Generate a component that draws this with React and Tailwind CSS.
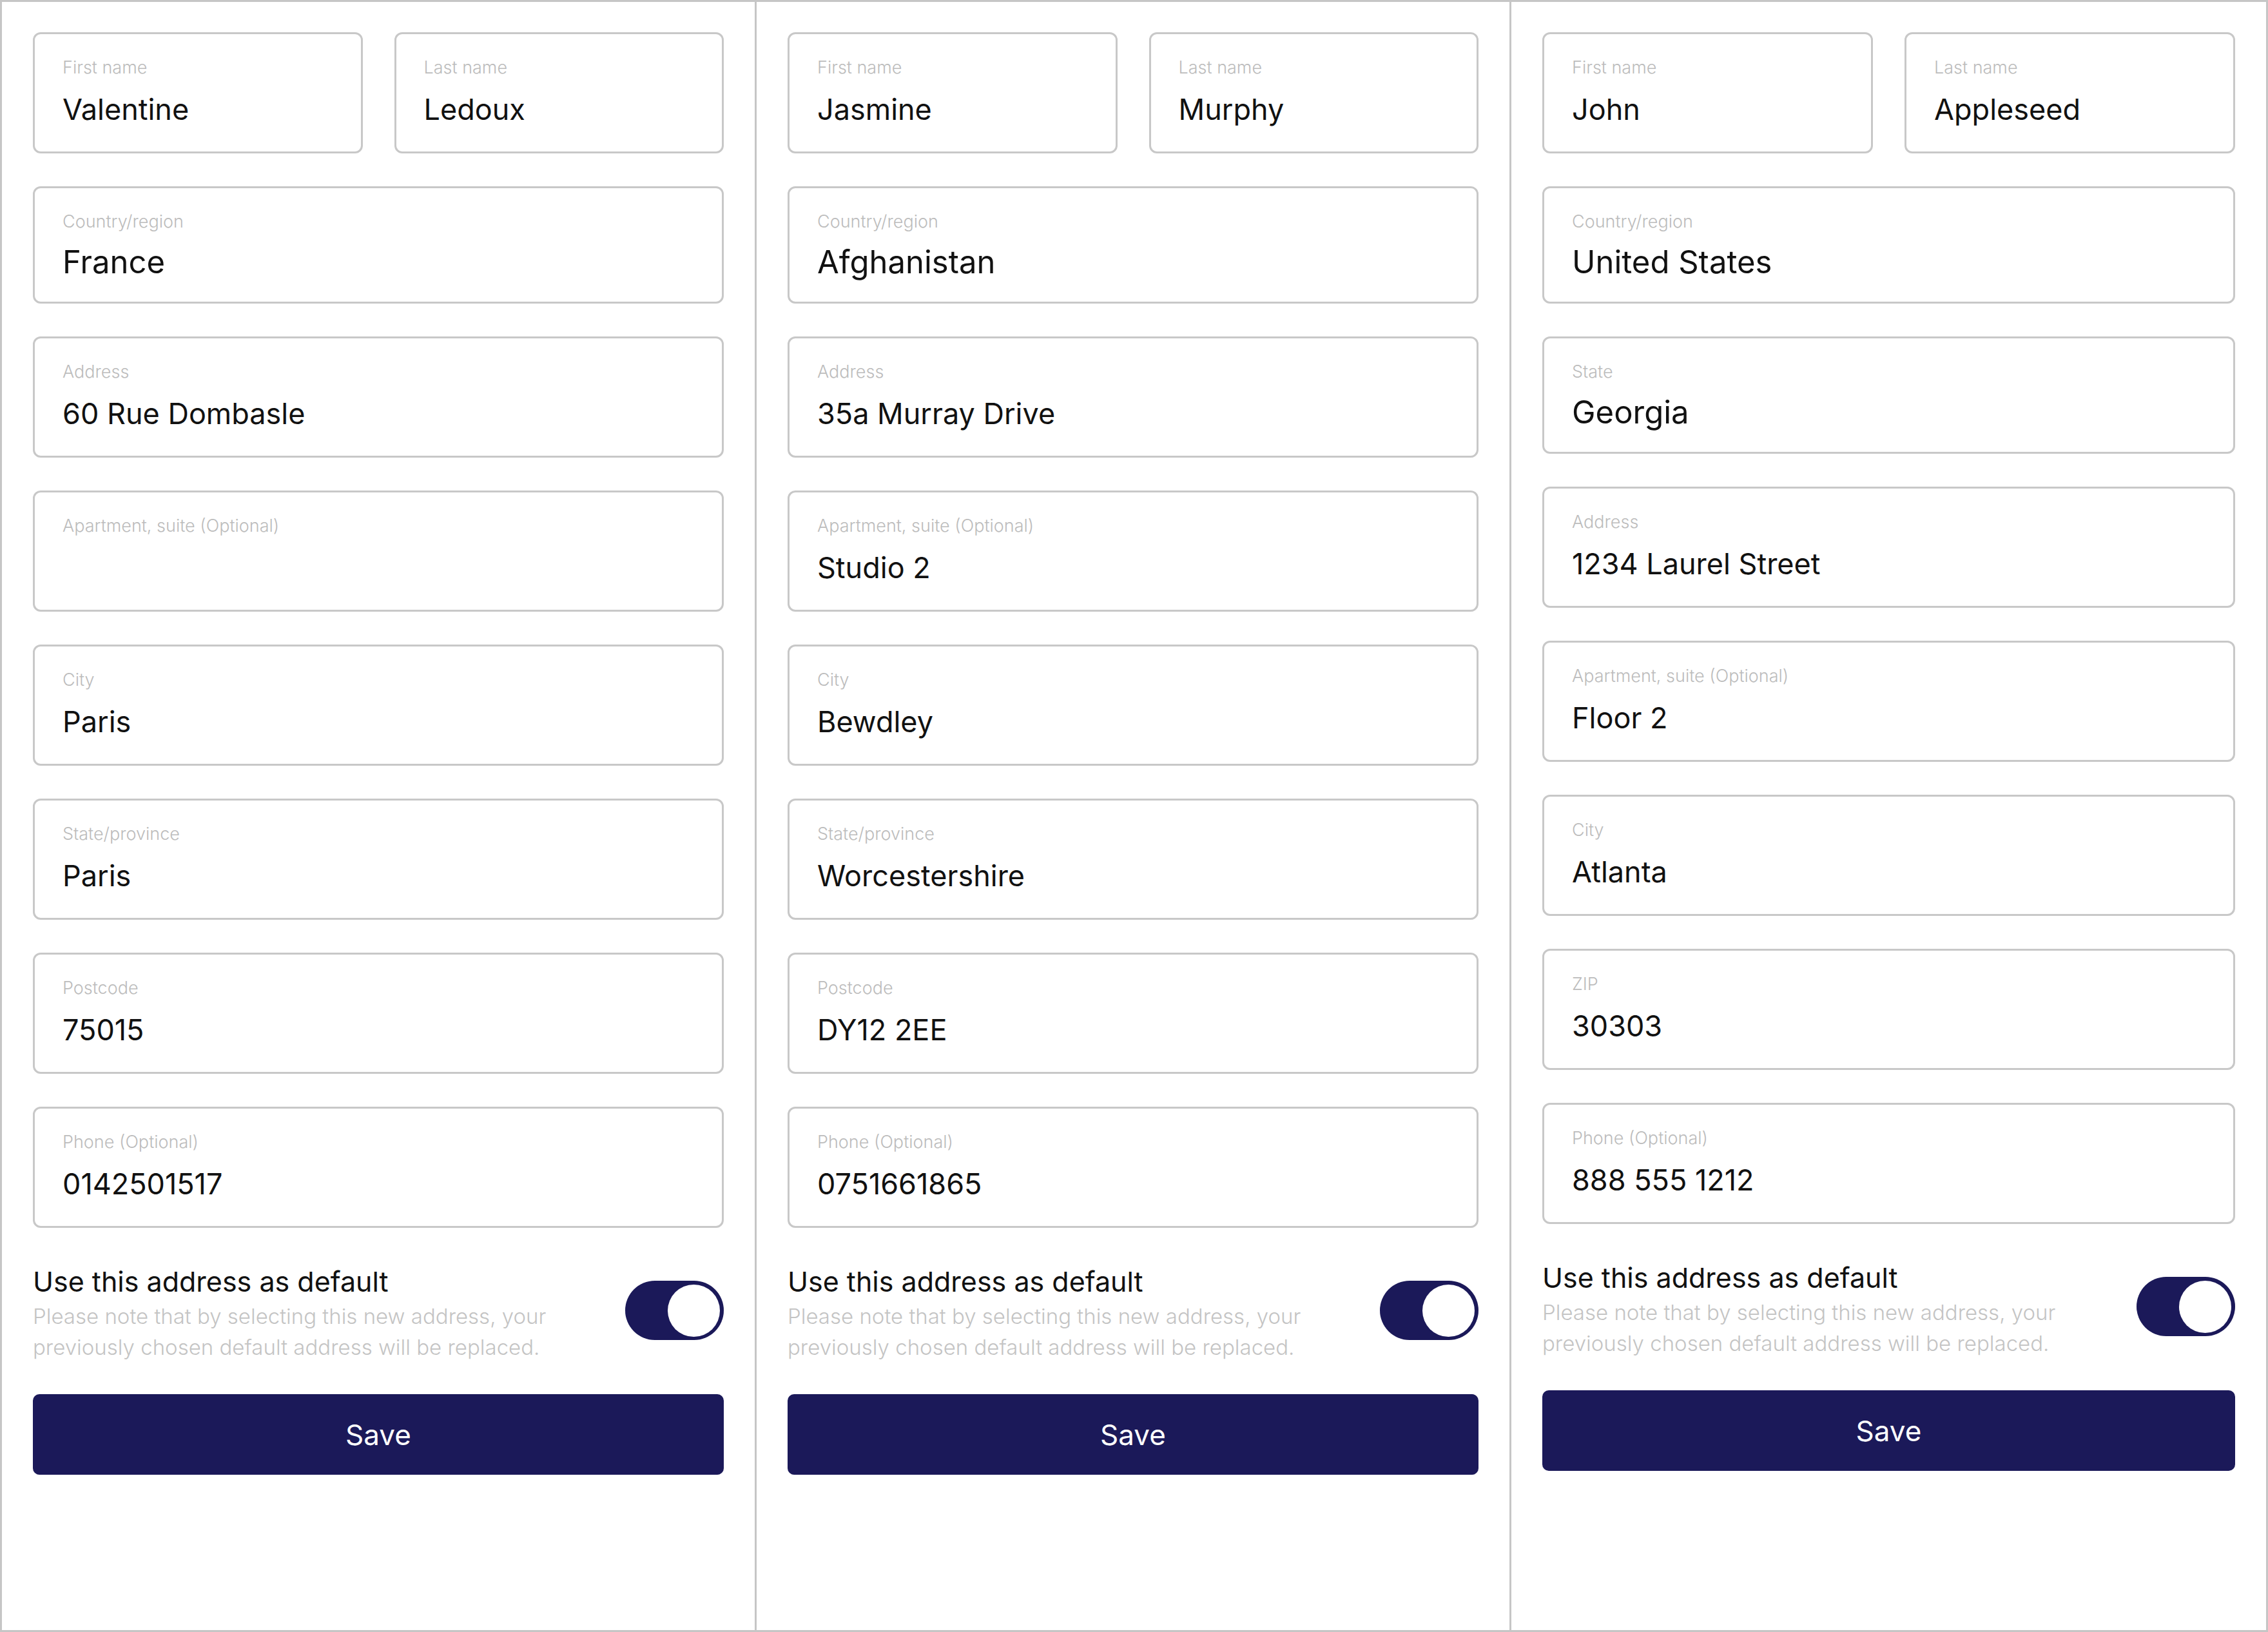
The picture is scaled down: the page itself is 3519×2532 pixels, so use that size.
import React from 'react'

const forms = [
    {
        first: 'Valentine',
        last: 'Ledoux',
        fields: [
            { label: 'Country/region', value: 'France', select: true },
            { label: 'Address', value: '60 Rue Dombasle' },
            { label: 'Apartment, suite (Optional)', value: '' },
            { label: 'City', value: 'Paris' },
            { label: 'State/province', value: 'Paris' },
            { label: 'Postcode', value: '75015' },
            { label: 'Phone (Optional)', value: '0142501517' },
        ],
    },
    {
        first: 'Jasmine',
        last: 'Murphy',
        fields: [
            { label: 'Country/region', value: 'Afghanistan', select: true },
            { label: 'Address', value: '35a Murray Drive' },
            { label: 'Apartment, suite (Optional)', value: 'Studio 2' },
            { label: 'City', value: 'Bewdley' },
            { label: 'State/province', value: 'Worcestershire' },
            { label: 'Postcode', value: 'DY12 2EE' },
            { label: 'Phone (Optional)', value: '0751661865' },
        ],
    },
    {
        first: 'John',
        last: 'Appleseed',
        fields: [
            { label: 'Country/region', value: 'United States', select: true },
            { label: 'State', value: 'Georgia', select: true },
            { label: 'Address', value: '1234 Laurel Street' },
            { label: 'Apartment, suite (Optional)', value: 'Floor 2' },
            { label: 'City', value: 'Atlanta' },
            { label: 'ZIP', value: '30303' },
            { label: 'Phone (Optional)', value: '888 555 1212' },
        ],
    },
]

function Field({ label, value, select }) {
    return (
        <div
            className={`rounded-[12px] border-[3px] border-[#c8c8c8] bg-white pl-[43px] pr-[24px] pt-[36px] ${select ? 'h-[182px]' : 'h-[188px]'}`}
        >
            <div className="text-[27px] leading-[32px] font-light text-[#bcbcbc] whitespace-nowrap">{label}</div>
            {select ? (
                <div className="mt-[19px] text-[49px] leading-[56px] text-[#111111] whitespace-nowrap">{value}</div>
            ) : (
                <div className="mt-[21px] text-[45px] leading-[56px] text-[#111111] whitespace-nowrap">
                    {value || '\u00a0'}
                </div>
            )}
        </div>
    )
}

function AddressForm({ form }) {
    return (
        <div className="flex flex-col px-[48px] pt-[47px]">
            <div className="flex flex-col gap-[51px]">
                <div className="grid grid-cols-2 gap-[49px]">
                    <Field label="First name" value={form.first} />
                    <Field label="Last name" value={form.last} />
                </div>
                {form.fields.map((f) => (
                    <Field key={f.label} label={f.label} value={f.value} select={f.select} />
                ))}
            </div>

            {/* default toggle */}
            <div className="mt-[57px] flex items-start gap-[48px]">
                <div className="flex-1 min-w-0">
                    <div className="text-[43px] leading-[52px] text-[#111111]">Use this address as default</div>
                    <p className="mt-[4px] max-w-[860px] text-[33px] leading-[48px] font-light text-[#c4c4c4]">
                        Please note that by selecting this new address, your previously chosen default address will be
                        replaced.
                    </p>
                </div>
                <button className="mt-[25px] flex h-[92px] w-[153px] shrink-0 items-center justify-end rounded-full bg-[#1b1959] pr-[6px]">
                    <span className="block h-[81px] w-[81px] rounded-full bg-white" />
                </button>
            </div>

            <button className="mt-[49px] h-[125px] w-full rounded-[10px] bg-[#1b1959] text-[44px] text-white">
                Save
            </button>
        </div>
    )
}

export default function App() {
    return (
        <div className="h-[2532px] w-full bg-white font-['Inter',sans-serif]">
            <div className="grid h-full grid-cols-3 divide-x-[3px] divide-[#c6c6c6] border-[3px] border-[#c6c6c6]">
                {forms.map((form) => (
                    <AddressForm key={form.first} form={form} />
                ))}
            </div>
        </div>
    )
}
